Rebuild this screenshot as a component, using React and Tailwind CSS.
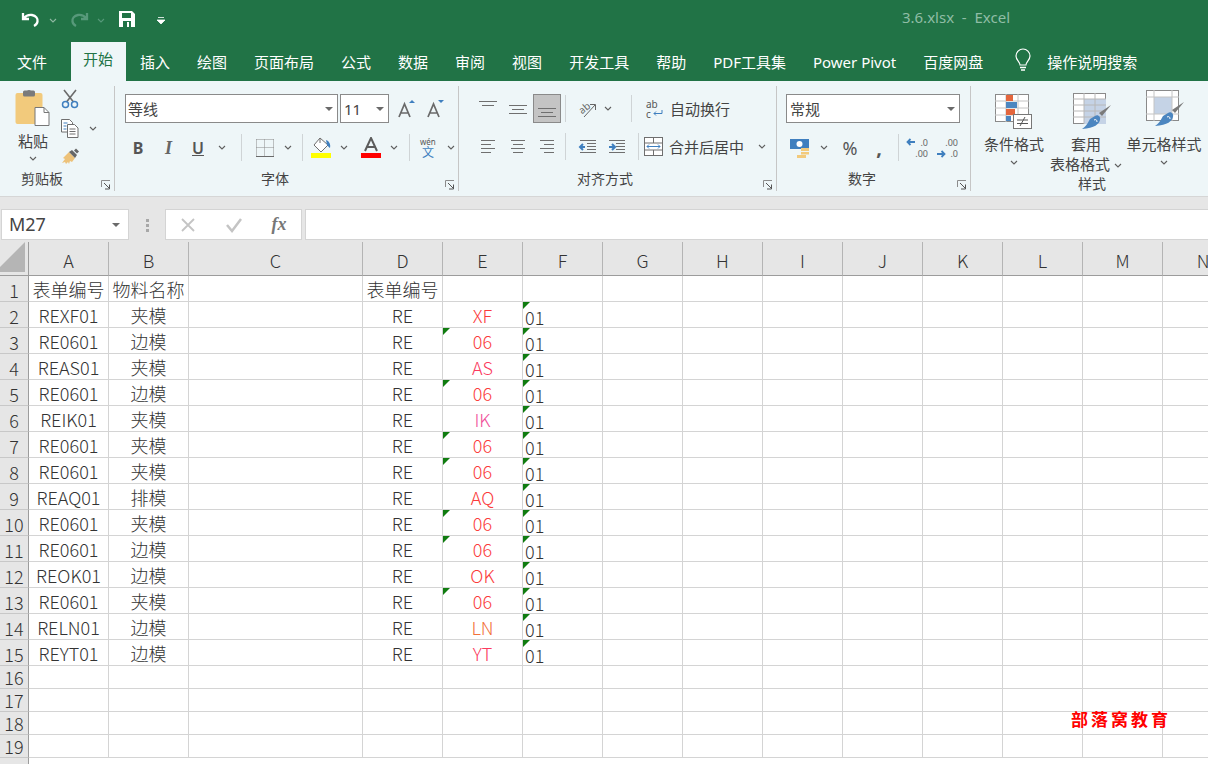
import React from "react";

const cjk = { fontFamily: '"Noto Sans", "Noto Sans CJK SC", sans-serif' };
const sheetFont = "font-['Noto_Sans_CJK_SC',sans-serif] font-light";

const columns = ["A", "B", "C", "D", "E", "F", "G", "H", "I", "J", "K", "L", "M", "N"];

const sheetRows = [
  ["表单编号", "物料名称", "表单编号", "", ""],
  ["REXF01", "夹模", "RE", "XF", "01"],
  ["RE0601", "边模", "RE", "06", "01"],
  ["REAS01", "夹模", "RE", "AS", "01"],
  ["RE0601", "边模", "RE", "06", "01"],
  ["REIK01", "夹模", "RE", "IK", "01"],
  ["RE0601", "夹模", "RE", "06", "01"],
  ["RE0601", "夹模", "RE", "06", "01"],
  ["REAQ01", "排模", "RE", "AQ", "01"],
  ["RE0601", "夹模", "RE", "06", "01"],
  ["RE0601", "边模", "RE", "06", "01"],
  ["REOK01", "边模", "RE", "OK", "01"],
  ["RE0601", "夹模", "RE", "06", "01"],
  ["RELN01", "边模", "RE", "LN", "01"],
  ["REYT01", "边模", "RE", "YT", "01"],
];

const tabs = ["插入", "绘图", "页面布局", "公式", "数据", "审阅", "视图", "开发工具", "帮助", "PDF工具集", "Power Pivot", "百度网盘"];

function codeColor(code) {
  if (code === "AS" || code === "YT") return "text-[#fb3a5e]";
  if (code === "IK") return "text-[#f0509a]";
  if (code === "LN") return "text-[#f2703a]";
  return "text-[#fb3b3b]";
}

function Chevron({ color = "#5f5f5f", className = "" }) {
  return (
    <svg width="8" height="5" viewBox="0 0 8 5" className={className}>
      <path d="M1 1l3 3 3-3" fill="none" stroke={color} strokeWidth="1.1" />
    </svg>
  );
}

function Caret() {
  return (
    <svg width="8" height="4" viewBox="0 0 8 4">
      <path d="M0 0h8L4 4z" fill="#6a6a6a" />
    </svg>
  );
}

function Launcher({ className = "" }) {
  return (
    <svg width="10" height="10" viewBox="0 0 10 10" className={className}>
      <path d="M.5 7V.5H9" fill="none" stroke="#8c8c8c" />
      <path d="M3 3l5 5M8.5 4.5v4.5H4" fill="none" stroke="#555" />
    </svg>
  );
}

function Slot({ w, children, className = "" }) {
  return <div className={`flex shrink-0 items-center justify-center ${className}`} style={{ width: w }}>{children}</div>;
}

function VLine() {
  return <div className="h-[27px] w-px shrink-0 bg-[#cfd4d6]" />;
}

function Lines({ widths, y = 0, anchor = "mid" }) {
  // little stack of text lines used by the alignment buttons
  return (
    <svg width="20" height="20" viewBox="0 0 20 20">
      {widths.map((w, i) => {
        const x = anchor === "left" ? 3 : anchor === "right" ? 17 - w : 10 - w / 2;
        return <rect key={i} x={x} y={y + i * 4} width={w} height="1" fill="#6f6f6f" />;
      })}
    </svg>
  );
}

function PasteIcon() {
  return (
    <svg width="36" height="38" viewBox="0 0 36 38">
      <rect x="0.5" y="4" width="27" height="31" rx="2" fill="#f2ca7c" />
      <rect x="8" y="1.5" width="12" height="6" rx="1.5" fill="#7b7b7b" />
      <circle cx="14" cy="3" r="2" fill="#7b7b7b" />
      <path d="M20 18.5h9l5 5v13H20z" fill="#fff" stroke="#777" />
      <path d="M29 18.5v5h5" fill="none" stroke="#777" />
    </svg>
  );
}

function ScissorsIcon() {
  return (
    <svg width="18" height="20" viewBox="0 0 18 20">
      <path d="M3 1l9.5 12M15 1L5.5 13" stroke="#6b6b6b" strokeWidth="1.6" fill="none" />
      <circle cx="4.5" cy="15.5" r="3" fill="none" stroke="#3f7fbf" strokeWidth="1.5" />
      <circle cx="13.5" cy="15.5" r="3" fill="none" stroke="#3f7fbf" strokeWidth="1.5" />
    </svg>
  );
}

function CopyIcon() {
  return (
    <svg width="18" height="19" viewBox="0 0 18 19">
      <path d="M.5.5h8l3 3V13H.5z" fill="#fff" stroke="#6f6f6f" />
      <path d="M6.5 5.5h7l3.5 3.5v9.5H6.5z" fill="#fff" stroke="#6f6f6f" />
      <path d="M2.5 4h4M2.5 7h3M2.5 10h3" stroke="#3f7fbf" />
      <path d="M8.5 10h6M8.5 12.5h6M8.5 15h6" stroke="#6f6f6f" />
    </svg>
  );
}

function BrushIcon() {
  return (
    <svg width="18" height="17" viewBox="0 0 18 17">
      <path d="M7 4l6 6-3 4-2-1-1 3-1-2-2 2-1-2-3 1 3-4-2-1z" fill="#edc27a" />
      <path d="M7 4l3-2 5 5-2 3z" fill="#666" />
      <path d="M12 2.5l2-2 3 3-2 2z" fill="#666" />
    </svg>
  );
}

function GrowIcon({ up }) {
  return (
    <svg width="20" height="20" viewBox="0 0 20 20">
      <path d="M2 18L7.5 5 13 18M4 14h7" fill="none" stroke="#6a6a6a" strokeWidth="1.7" />
      <path d={up ? "M12 4l3-3 3 3z" : "M12 1h6l-3 3z"} fill="#3f7fbf" />
    </svg>
  );
}

function BorderIcon() {
  return (
    <svg width="18" height="18" viewBox="0 0 18 18">
      <path d="M.5.5h17M.5 8.5h17M.5.5v17M8.5.5v17M17.5.5v17" stroke="#8a8a8a" strokeDasharray="1 1" fill="none" />
      <path d="M0 17.5h18" stroke="#6a6a6a" />
    </svg>
  );
}

function FillIcon() {
  return (
    <svg width="21" height="21" viewBox="0 0 21 21">
      <path d="M9 1l8 7-7 7-7-7z" fill="#fff" stroke="#6f6f6f" />
      <path d="M9 1V6" stroke="#6f6f6f" />
      <path d="M15 3c3 1 5 4 4 8-1.500-1-2-2-3-3z" fill="#3f7fbf" />
      <rect x="0" y="16" width="20" height="5" fill="#ffff00" />
    </svg>
  );
}

function FontColorIcon() {
  return (
    <svg width="20" height="21" viewBox="0 0 20 21">
      <path d="M4 14L10 1l6 13M6 10h8" fill="none" stroke="#5c5c5c" strokeWidth="2" />
      <rect x="0" y="16" width="20" height="5" fill="#ff0000" />
    </svg>
  );
}

function WenIcon() {
  return (
    <svg width="18" height="20" viewBox="0 0 18 20">
      <text x="1" y="7" fontSize="8" fill="#555" fontFamily="Noto Sans">wén</text>
      <text x="3" y="19" fontSize="12" fill="#3f7fbf" fontFamily="Noto Sans CJK SC">文</text>
    </svg>
  );
}

function OrientIcon() {
  return (
    <svg width="20" height="20" viewBox="0 0 20 20">
      <text x="1" y="13" fontSize="10" fill="#666" fontFamily="Noto Sans" transform="rotate(-40 6 10)">ab</text>
      <path d="M6 18L17 6M12 5.500h5.500V11" fill="none" stroke="#666" />
    </svg>
  );
}

function IndentIcon({ out }) {
  return (
    <svg width="20" height="16" viewBox="0 0 20 16">
      {[0, 1, 2, 3, 4].map((i) => (
        <rect key={i} x={i === 0 || i === 4 ? 2 : 9} y={1 + i * 3} width={i === 0 || i === 4 ? 16 : 9} height="1" fill="#6f6f6f" />
      ))}
      {out ? (
        <path d="M7 8H2.500M5 5L2 8l3 3" fill="none" stroke="#3f7fbf" strokeWidth="2" />
      ) : (
        <path d="M2 8h5M5 5l3 3-3 3" fill="none" stroke="#3f7fbf" strokeWidth="2" />
      )}
    </svg>
  );
}

function WrapIcon() {
  return (
    <svg width="18" height="20" viewBox="0 0 18 20">
      <text x="0" y="9" fontSize="10" fill="#555" fontFamily="Noto Sans">ab</text>
      <text x="0" y="19" fontSize="10" fill="#555" fontFamily="Noto Sans">c</text>
      <path d="M16 11v3.500H8M10 12.500l-2 2 2 2" fill="none" stroke="#3f7fbf" />
    </svg>
  );
}

function MergeIcon() {
  return (
    <svg width="20" height="20" viewBox="0 0 20 20">
      <rect x=".5" y=".5" width="18" height="18" fill="#fff" stroke="#6f6f6f" />
      <path d="M.5 6h18M.5 13h18M9.500.5V6M9.500 13v6" stroke="#6f6f6f" fill="none" />
      <path d="M3 9.500h13M5 7.500l-2 2 2 2M14 7.500l2 2-2 2" fill="none" stroke="#3f7fbf" />
    </svg>
  );
}

function CurrencyIcon() {
  return (
    <svg width="20" height="20" viewBox="0 0 20 20">
      <rect x="0" y="1" width="19" height="10" fill="#3f7fbf" />
      <circle cx="9.500" cy="6" r="3" fill="#fff" />
      <rect x="11" y="10" width="8" height="3" fill="#f2ca7c" />
      <rect x="11" y="14" width="8" height="2.500" fill="#f2ca7c" />
      <rect x="7" y="17" width="9" height="3" fill="#f2ca7c" />
    </svg>
  );
}

function DecimalIcon({ more }) {
  return (
    <div className="relative h-[20px] w-[22px] text-[9px] leading-[9px] text-[#666]">
      <span className="absolute top-0 right-0">{more ? ".0" : ".00"}</span>
      <span className="absolute bottom-0 right-0">{more ? ".00" : ".0"}</span>
      <svg width="10" height="8" viewBox="0 0 10 8" className={`absolute left-0 ${more ? "top-0" : "bottom-0"}`}>
        {more ? <path d="M9 4H2M4.500 1L1.500 4l3 3" fill="none" stroke="#3f7fbf" strokeWidth="1.800" /> : <path d="M1 4h7M5.500 1l3 3-3 3" fill="none" stroke="#3f7fbf" strokeWidth="1.800" />}
      </svg>
    </div>
  );
}

function CondFormatIcon() {
  return (
    <svg width="38" height="36" viewBox="0 0 38 36">
      <rect x=".5" y=".5" width="33" height="27" fill="#fff" stroke="#8a8a8a" />
      <path d="M11 0v28M23 0v28M0 7h34M0 14h34M0 21h34" stroke="#c4c4c4" />
      <rect x="11" y="1" width="7" height="6" fill="#e4663d" />
      <rect x="11" y="8" width="11" height="6" fill="#4c86c0" />
      <rect x="11" y="15" width="9" height="6" fill="#e4663d" />
      <rect x="11" y="22" width="5" height="5" fill="#4c86c0" />
      <rect x="18.500" y="20.500" width="18" height="14" fill="#fff" stroke="#777" />
      <path d="M22 26h11M22 29.500h11M30 23l-5 9" stroke="#555" fill="none" />
    </svg>
  );
}

function TableStyleIcon({ cell }) {
  return (
    <svg width="38" height="37" viewBox="0 0 38 37">
      <rect x=".5" y=".5" width="32" height="30" fill="#fff" stroke="#8a8a8a" />
      {cell ? (
        <>
          <rect x="8" y="7" width="18" height="17" fill="#c5d3e6" />
          <path d="M8 0v31M26 0v31M0 7h33M0 24h33" stroke="#c4c4c4" />
        </>
      ) : (
        <>
          <rect x="11" y="6" width="22" height="25" fill="#c5d3e6" />
          <path d="M11 0v31M22 0v31M0 6h33M0 12h33M0 18h33M0 24h33" stroke="#b8b8b8" />
        </>
      )}
      <path d="M38 12l-9 11-3-3z" fill="#7a7a7a" />
      <path d="M22 23c3-2 6 1 5 4-1 4-5 8-18 9 5-3 6-7 8-10z" fill="#4c86c0" />
      <path d="M21 27c2-1 3 0 3 2" fill="none" stroke="#fff" />
    </svg>
  );
}

function TitleBar() {
  return (
    <div className="flex h-[40px] items-center bg-[#217346]">
      <svg width="22" height="18" viewBox="0 0 22 18" className="ml-[20px]">
        <path d="M3 2v6h6M3.500 7.500C6 4.500 9 3.500 12 4c4 .6 6 3.500 5.500 6.500-.3 2-1.500 3.500-3.500 4.500" fill="none" stroke="#fff" strokeWidth="2.300" />
      </svg>
      <Chevron color="#8fb9a2" className="ml-[7px]" />
      <svg width="22" height="18" viewBox="0 0 22 18" className="ml-[11px]">
        <path d="M19 2v6h-6M18.500 7.500C16 4.500 13 3.500 10 4c-4 .6-6 3.500-5.500 6.500.3 2 1.500 3.500 3.500 4.500" fill="none" stroke="#57997a" strokeWidth="2.300" />
      </svg>
      <Chevron color="#57997a" className="ml-[7px]" />
      <svg width="16" height="16" viewBox="0 0 16 16" className="mb-[3px] ml-[14px]">
        <path d="M0 0h13l3 3v13H0z" fill="#fff" />
        <rect x="3" y="2" width="9" height="5" fill="#217346" />
        <rect x="4" y="10" width="8" height="6" fill="#217346" />
        <rect x="8" y="11" width="2" height="5" fill="#fff" />
      </svg>
      <svg width="8" height="7" viewBox="0 0 8 7" className="ml-[22px] mt-[1px]">
        <path d="M1 .5h6M0 3h8L4 7z" stroke="#fff" strokeWidth=".8" fill="#fff" />
      </svg>
      <div className="ml-auto mr-[198px] mb-[6px] whitespace-pre text-[15px] text-[#8fbda5]">3.6.xlsx  -  Excel</div>
    </div>
  );
}

function TabRow() {
  return (
    <div className="flex h-[41px] items-end bg-[#217346] pl-[17px] text-[15px] text-white">
      <div className="h-[33px] leading-[28px]">文件</div>
      <div className="ml-[24px] h-[39px] w-[55px] bg-[#eef6f8] pl-[12px] leading-[34px] text-[#217346]">开始</div>
      <div className="ml-[14px] flex h-[33px] gap-[27px] leading-[28px]">
        {tabs.map((t) => (
          <div key={t} className="whitespace-nowrap">{t}</div>
        ))}
      </div>
      <svg width="18" height="24" viewBox="0 0 18 24" className="mb-[9px] ml-[31px]">
        <path d="M6 17c0-3-4-5-4-9a7 7 0 0 1 14 0c0 4-4 6-4 9z" fill="none" stroke="#fff" strokeWidth="1.200" />
        <path d="M6 19.500h6M7 22h4" stroke="#fff" strokeWidth="1.500" />
      </svg>
      <div className="ml-[15px] h-[33px] leading-[28px]">操作说明搜索</div>
    </div>
  );
}

function Group({ w, label, center, launcher = true, children }) {
  return (
    <div className="relative flex shrink-0 flex-col border-r border-[#c6c6c6] my-[5px]" style={{ width: w }}>
      <div className="flex-1">{children}</div>
      <div className="h-[22px] text-[14px] leading-[20px] text-[#444]" style={{ paddingLeft: center }}>{label}</div>
      {launcher && <Launcher className="absolute right-[3px] bottom-[1px]" />}
    </div>
  );
}

function Ribbon() {
  return (
    <div className="flex h-[116px] border-b border-[#d6d6d6] bg-[#eef6f8] text-[15px] leading-[20px] text-[#444]">
      {/* clipboard */}
      <Group w={115} label="剪贴板" center={21}>
        <div className="flex">
          <div className="ml-[15px] flex w-[36px] flex-col items-center">
            <div className="mt-[3px]"><PasteIcon /></div>
            <div className="mt-[4px]">粘贴</div>
            <Chevron className="mt-[5px]" />
          </div>
          <div className="ml-[9px] flex flex-col items-start">
            <div className="mt-[3px] ml-[1px]"><ScissorsIcon /></div>
            <div className="mt-[10px] ml-[1px] flex items-center"><CopyIcon /><Chevron className="ml-[10px]" /></div>
            <div className="mt-[10px] ml-[2px]"><BrushIcon /></div>
          </div>
        </div>
      </Group>

      {/* font */}
      <Group w={344} label="字体" center={146}>
        <div className="pl-[10px] pt-[8px]">
          <div className="flex items-center">
            <div className="flex h-[29px] w-[213px] items-center justify-between border border-[#8a8a8a] bg-white pr-[4px] pl-[2px]">
              <span>等线</span><Caret />
            </div>
            <div className="ml-[2px] flex h-[29px] w-[49px] items-center justify-between border border-[#8a8a8a] bg-white pr-[4px] pl-[3px]">
              <span>11</span><Caret />
            </div>
            <Slot w={33} className="ml-[1px]"><GrowIcon up /></Slot>
            <Slot w={25}><GrowIcon /></Slot>
          </div>
          <div className="mt-[11px] flex h-[27px] items-center">
            <Slot w={26} className="text-[16px] font-bold text-[#555]">B</Slot>
            <Slot w={35} className="font-['Liberation_Serif'] text-[18px] font-bold italic text-[#666]">I</Slot>
            <Slot w={24} className="text-[16px] font-semibold text-[#555] underline">U</Slot>
            <Slot w={24}><Chevron /></Slot>
            <Slot w={14}><VLine /></Slot>
            <Slot w={22} className="mx-[6px]"><BorderIcon /></Slot>
            <Slot w={8} className="ml-[2px]"><Chevron /></Slot>
            <Slot w={14} className="ml-[3px]"><VLine /></Slot>
            <Slot w={24}><FillIcon /></Slot>
            <Slot w={22}><Chevron /></Slot>
            <Slot w={30} className="ml-[1px]"><FontColorIcon /></Slot>
            <Slot w={16}><Chevron /></Slot>
            <Slot w={14}><VLine /></Slot>
            <Slot w={24}><WenIcon /></Slot>
            <Slot w={22}><Chevron /></Slot>
          </div>
        </div>
      </Group>

      {/* alignment */}
      <Group w={318} label="对齐方式" center={118}>
        <div className="pt-[8px] pl-[14px]">
          <div className="flex h-[29px] items-center">
            <Slot w={30}><Lines widths={[18, 12, 0]} y={2} /></Slot>
            <Slot w={30}><Lines widths={[18, 12, 18]} y={6} /></Slot>
            <Slot w={28} className="h-[29px] border border-[#8a8a8a] bg-[#c4c4c4]"><Lines widths={[18, 12, 18]} y={9} /></Slot>
            <Slot w={8}><VLine /></Slot>
            <Slot w={28} className="ml-[5px]"><OrientIcon /></Slot>
            <Slot w={12}><Chevron /></Slot>
            <Slot w={30} className="ml-[2px]"><VLine /></Slot>
            <WrapIcon />
            <span className="ml-[6px]">自动换行</span>
          </div>
          <div className="mt-[10px] flex h-[27px] items-center">
            <Slot w={30}><Lines widths={[14, 10, 14, 10]} y={3} anchor="left" /></Slot>
            <Slot w={30}><Lines widths={[14, 10, 14, 10]} y={3} /></Slot>
            <Slot w={28}><Lines widths={[14, 10, 14, 10]} y={3} anchor="right" /></Slot>
            <Slot w={8}><VLine /></Slot>
            <Slot w={28} className="ml-[5px]"><IndentIcon out /></Slot>
            <Slot w={30}><IndentIcon /></Slot>
            <Slot w={12}><VLine /></Slot>
            <MergeIcon />
            <span className="ml-[5px]">合并后居中</span>
            <Chevron className="ml-[14px]" />
          </div>
        </div>
      </Group>

      {/* number */}
      <Group w={194} label="数字" center={71}>
        <div className="pt-[8px] pl-[9px]">
          <div className="flex h-[29px] w-[174px] items-center justify-between border border-[#8a8a8a] bg-white pr-[4px] pl-[3px]">
            <span>常规</span><Caret />
          </div>
          <div className="mt-[11px] flex h-[27px] items-center">
            <Slot w={28}><CurrencyIcon /></Slot>
            <Slot w={20}><Chevron /></Slot>
            <Slot w={32} className="text-[18px] text-[#555]">%</Slot>
            <Slot w={26} className="text-[20px] font-bold text-[#555]">,</Slot>
            <Slot w={12}><VLine /></Slot>
            <Slot w={26}><DecimalIcon more /></Slot>
            <Slot w={34}><DecimalIcon /></Slot>
          </div>
        </div>
      </Group>

      {/* styles */}
      <div className="my-[5px] flex flex-1 flex-col">
        <div className="flex flex-1 text-center">
          <div className="ml-[12px] flex w-[62px] flex-col items-center pt-[8px]">
            <CondFormatIcon />
            <div className="mt-[4px] whitespace-nowrap">条件格式</div>
            <Chevron className="mt-[6px]" />
          </div>
          <div className="ml-[3px] flex w-[76px] flex-col items-center pt-[7px]">
            <div className="ml-[12px]"><TableStyleIcon /></div>
            <div className="mt-[4px]">套用</div>
            <div className="whitespace-nowrap">表格格式 <Chevron className="inline" /></div>
          </div>
          <div className="ml-[1px] flex w-[78px] flex-col items-center pt-[4px]">
            <div className="ml-[2px]"><TableStyleIcon cell /></div>
            <div className="mt-[7px] whitespace-nowrap">单元格样式</div>
            <Chevron className="mt-[6px]" />
          </div>
        </div>
        <div className="h-[22px] pl-[107px] text-[14px] leading-[20px]">样式</div>
      </div>
    </div>
  );
}

function FormulaBar() {
  return (
    <div className="flex h-[45px] bg-[#e6e6e6] pt-[12px]">
      <div className="ml-[1px] flex h-[31px] w-[128px] items-center justify-between border border-[#d4d4d4] bg-white pr-[8px] pl-[7px] text-[18px] text-[#444]">
        <span>M27</span><Caret />
      </div>
      <div className="flex w-[36px] flex-col items-center justify-center gap-[2px]">
        <div className="size-[3px] bg-[#a8a8a8]" />
        <div className="size-[3px] bg-[#a8a8a8]" />
        <div className="size-[3px] bg-[#a8a8a8]" />
      </div>
      <div className="flex h-[31px] w-[137px] items-center border border-[#d4d4d4] bg-white">
        <Slot w={44}>
          <svg width="16" height="16" viewBox="0 0 16 16"><path d="M2 2l12 12M14 2L2 14" stroke="#c4c4c4" strokeWidth="1.800" /></svg>
        </Slot>
        <Slot w={47}>
          <svg width="18" height="16" viewBox="0 0 18 16"><path d="M2 8l5 6L16 2" fill="none" stroke="#c4c4c4" strokeWidth="2.500" /></svg>
        </Slot>
        <Slot w={44} className="font-['Liberation_Serif'] text-[18px] font-bold italic text-[#777]">fx</Slot>
      </div>
      <div className="ml-[3px] h-[31px] flex-1 border-y border-l border-[#d4d4d4] bg-white" />
    </div>
  );
}

function Triangle() {
  return <div className="absolute top-0 left-0 size-0 border-t-[7px] border-r-[7px] border-t-[#107c10] border-r-transparent" />;
}

function Cell({ children, className = "" }) {
  return <div className={`relative flex items-center justify-center whitespace-nowrap border-r border-b border-[#d4d4d4] text-[18px] leading-none text-[#333] ${className}`}>{children}</div>;
}

function Sheet() {
  const numbers = Array.from({ length: 19 }, (_, i) => i + 1);
  return (
    <div className={`relative grid grid-cols-[29px_80px_80px_174px_80px_80px_80px_80px_80px_80px_80px_80px_80px_80px_80px_46px] grid-rows-[34px_repeat(15,26px)_repeat(4,23px)_6px] ${sheetFont}`}>
      <div className="relative border-r border-b border-[#9c9c9c] bg-[#e6e6e6]">
        <div className="absolute right-[3px] bottom-[3px] size-0 border-t-[15px] border-l-[15px] border-t-transparent border-l-transparent border-r-[15px] border-b-[15px] border-r-[#b5b5b5] border-b-[#b5b5b5] [border-width:0_0_15px_15px] [border-color:transparent_transparent_#b5b5b5_transparent]" />
      </div>
      {columns.map((c, i) => (
        <div key={c} className={`flex items-end justify-center border-b border-[#9c9c9c] bg-[#e6e6e6] pb-[2px] text-[18px] leading-[26px] text-[#333] ${i < 13 ? "border-r border-r-[#b4b4b4]" : ""}`}>{c}</div>
      ))}
      <div className="border-b border-[#9c9c9c] bg-[#e6e6e6]" />
      {numbers.map((n) => {
        const row = sheetRows[n - 1];
        return (
          <React.Fragment key={n}>
            <div className="flex items-end justify-center border-r border-b border-r-[#9c9c9c] border-b-[#c8c8c8] bg-[#e6e6e6] text-[18px] leading-[22px] text-[#333]">{n}</div>
            <Cell>{row && row[0]}</Cell>
            <Cell>{row && row[1]}</Cell>
            <Cell />
            <Cell>{row && row[2]}</Cell>
            <Cell className={row ? codeColor(row[3]) : ""}>
              {row && row[3] === "06" && <Triangle />}
              {row && row[3]}
            </Cell>
            <Cell className="!justify-start pl-[2px] pt-[5px]">
              {row && row[4] && <Triangle />}
              {row && row[4]}
            </Cell>
            {["g", "h", "i", "j", "k", "l", "m", "n"].map((k) => <Cell key={k} />)}
            <div className="border-b border-[#d4d4d4]" />
          </React.Fragment>
        );
      })}
      <div className="border-r border-[#9c9c9c] bg-[#e6e6e6]" />
      <div className="absolute top-[464px] left-[1071px] whitespace-nowrap text-[17px] font-bold tracking-[3px] text-[#f00]">部落窝教育</div>
    </div>
  );
}

export default function App() {
  return (
    <div className="h-[764px] w-[1208px] overflow-hidden bg-white" style={cjk}>
      <TitleBar />
      <TabRow />
      <Ribbon />
      <FormulaBar />
      <Sheet />
    </div>
  );
}
